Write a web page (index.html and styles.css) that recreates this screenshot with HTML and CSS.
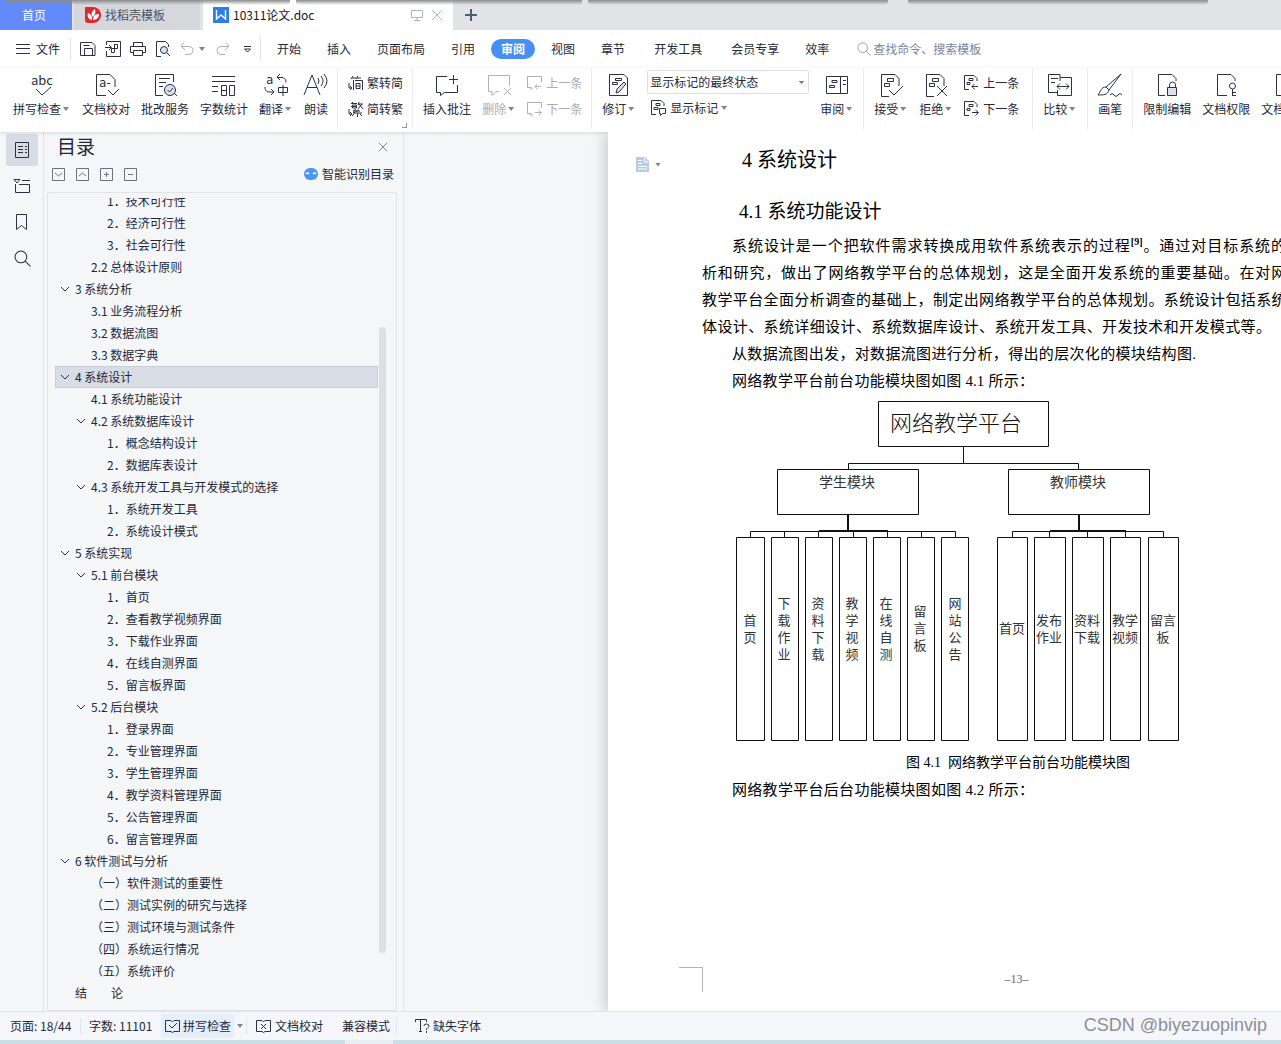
FILE: index.html
```html
<!DOCTYPE html>
<html lang="zh-CN">
<head>
<meta charset="utf-8">
<title>10311论文.doc</title>
<link rel="stylesheet" href="styles.css">
</head>
<body>
<svg class="defs" aria-hidden="true">
  <symbol id="doc-marks" viewBox="0 0 28 24"><path d="M12 23.500H4.500V1.500H18l4 4V13M10.500 5.500h6v3h-6zM7.500 10.500h5v3h-5z"/></symbol>
  <symbol id="x" viewBox="0 0 12 12"><path d="M1 1l10 10M11 1L1 11"/></symbol>
  <symbol id="chev" viewBox="0 0 10 6"><path d="M1 1l4 4 4-4"/></symbol>
  <symbol id="lens" viewBox="0 0 16 16"><circle cx="6.500" cy="6.500" r="5.500"/><path d="M10.500 10.500l5 5"/></symbol>
</svg>
<div class="app">
  <div class="backdrop" aria-hidden="true"><i></i><i></i><i></i><i></i></div>
  <nav class="tabs">
    <a class="tab home" href="#">首页</a>
    <a class="tab template" href="#">
      <svg width="16" height="16" viewBox="0 0 16 16"><path d="M1 0h7a8 8 0 010 16H3a3 3 0 01-3-3V1a1 1 0 011-1z" fill="#e2282f"/><path d="M7 13C3 12 2 9 3 6c3 1 4 3 4 7zm0-3c-1-4 0-6 3-8 1 4 0 6-3 8zm1 3c0-4 2-6 6-6 0 3-2 6-6 6z" fill="#fff"/></svg>找稻壳模板</a>
    <a class="tab current" href="#">
      <svg width="16" height="16" viewBox="0 0 16 16"><path d="M0 0h16v16H0z" fill="#2b7de9"/><path d="M3.500 3v9L8 8l4.500 4V3" fill="none" stroke="#fff" stroke-width="1.400"/></svg>
      <span class="name">10311论文.doc</span>
      <svg class="ic pale" width="12" height="12" viewBox="0 0 12 12"><path d="M.5 1.500h11v7H.5zM6 9v2M3 11.500h6"/></svg>
      <svg class="ic pale shut" width="12" height="12"><use href="#x"/></svg></a>
    <button class="add" aria-label="新建"><svg class="ic" width="12" height="12" viewBox="0 0 12 12"><path d="M6 0v12M0 6h12" stroke-width="2"/></svg></button>
  </nav>

  <div class="menu">
    <button class="file"><svg class="ic" width="14" height="12" viewBox="0 0 14 12"><path d="M0 1.500h14M0 5.500h14M0 10.500h14"/></svg>文件</button>
    <div class="quick">
      <button aria-label="保存"><svg class="ic" width="16" height="16" viewBox="0 0 16 16"><path d="M.5 14.500V1.500H12l3 3v10H.5M4.500 14V7.500h8V14M3.500 4.500h6"/></svg></button>
      <button aria-label="输出PDF"><svg class="ic" width="16" height="16" viewBox="0 0 16 16"><path d="M1.500 4V.5h14v15h-14V10M0 6.500h6M4 4l2.500 2.500L4 9M9.500 3v8M9.500 3.500h3v4h-6v4h3"/></svg></button>
      <button aria-label="打印"><svg class="ic" width="16" height="16" viewBox="0 0 16 16"><path d="M3.500 5V1.500h9V5M3 11.500H.5v-6h15v6H13M3.500 9.500h9v5h-9z"/></svg></button>
      <button aria-label="打印预览"><svg class="ic" width="16" height="16" viewBox="0 0 16 16"><path d="M6 15.500H1.500V.5h9l3 3V6"/><circle cx="9" cy="9" r="3.500" fill="#dce0e8"/><path d="M12 12l3 3"/></svg></button>
      <button aria-label="撤销" class="undo"><svg class="ic off" width="14" height="14" viewBox="0 0 14 14"><path d="M4 1L1 4l4 4M1 4.500h8a4 4 0 010 8H5"/></svg><i class="caret"></i></button>
      <button aria-label="恢复"><svg class="ic off" width="14" height="14" viewBox="0 0 14 14"><path d="M10 1l3 3-4 4M13 4.500H5a4 4 0 000 8h4"/></svg></button>
      <button aria-label="更多" class="more"><svg class="ic" width="9" height="9" viewBox="0 0 9 9"><path d="M1 1.500h7M1.500 4l3 3 3-3z"/></svg></button>
    </div>
    <nav class="ribbon-tabs">
      <a href="#">开始</a><a href="#">插入</a><a href="#">页面布局</a><a href="#">引用</a><a href="#" class="on"><span>审阅</span></a><a href="#">视图</a><a href="#">章节</a><a href="#" class="wide">开发工具</a><a href="#" class="wide">会员专享</a><a href="#">效率</a>
    </nav>
    <label class="find"><svg class="ic" width="14" height="14"><use href="#lens"/></svg><input type="text" aria-label="查找" placeholder="查找命令、搜索模板"></label>
  </div>

  <div class="ribbon">
    <div class="group">
      <button class="big"><svg class="ic" width="28" height="24" viewBox="0 0 28 24"><text x="14" y="12" text-anchor="middle" class="t13">abc</text><path d="M8 16l6 6 9-8"/></svg><span>拼写检查<i class="caret"></i></span></button>
      <button class="big"><svg class="ic" width="28" height="24" viewBox="0 0 28 24"><path d="M14 22.500H4.500V1.500H18l5 5V14M16 17l5 5 6-6"/><text x="7" y="14" class="t13">a-</text></svg><span>文档校对</span></button>
      <button class="big"><svg class="ic" width="28" height="24" viewBox="0 0 28 24"><path d="M12 22.500H4.500V1.500h18V9M8 5.500h11M8 9.500h7M8 13.500h4"/><circle cx="19" cy="17" r="5.500" fill="#dce0e8"/><path d="M23 20l3 3M16.500 17l2 2 3.500-4"/></svg><span>批改服务</span></button>
      <button class="big"><svg class="ic" width="28" height="24" viewBox="0 0 28 24"><path d="M2 3.500h23M2 8.500h23M2 13.500h6M2 18.500h6M11.500 12.500h5v10h-5zM11.500 17.500h5M19.500 12.500h5v10h-5z"/></svg><span>字数统计</span></button>
      <button class="big"><svg class="ic" width="28" height="24" viewBox="0 0 28 24"><text x="4" y="11" class="t13">a</text><path d="M18 1l-3 3 3 3M15 4.500h4c3 0 5 1 5 5M3 14c0 4 2 5 5 5h4M9 16l3 3-3 3M16.500 14.500h9v5h-9zM21 12v11"/></svg><span>翻译<i class="caret"></i></span></button>
      <button class="big"><svg class="ic" width="28" height="24" viewBox="0 0 28 24"><path d="M2 22l8-20 8 20M5 14.500h10M16 5q2 3 0 6M19 3q4 5 0 10M22 1q6 7 0 14"/></svg><span>朗读</span></button>
    </div>
    <div class="group corner">
      <div class="pair">
        <button class="small"><svg class="ic" width="15" height="16" viewBox="0 0 15 16"><path d="M5.500 5v10M5 1L3 4M4 3h4M10 1L8 4M9 3h4M7 5.500h7.500V15M8 8.500h4v5H8zM8 11h4M1 8v5h3M2 11l2 2-2 2"/></svg>繁转简</button>
        <button class="small"><svg class="ic" width="15" height="16" viewBox="0 0 15 16"><path d="M5 1L3 3M4 2.500h5M4.500 4h4v3h-4zM3 5.500h6M11 1l-1 3M10 3h5M11 3l4 5M14 3l-4 5M8 8l-3 2h7M11 9l-6 3h9M9.500 12v4M6 13l-2 2M12 13l2 2M1 8v5h3M2 11l2 2-2 2"/></svg>简转繁</button>
      </div>
    </div>
    <div class="group">
      <button class="big"><svg class="ic" width="28" height="24" viewBox="0 0 28 24"><path d="M14 3.500H3.500v16h4v3l4-3h13V12M20.500 2v9M16 6.500h9"/></svg><span>插入批注</span></button>
      <button class="big off"><svg class="ic" width="28" height="24" viewBox="0 0 28 24"><path d="M14 18.500h-3l-4 4v-4H3.500v-16h21V13M19 15l7 7M26 15l-7 7"/></svg><span>删除<i class="caret"></i></span></button>
      <div class="pair off">
        <button class="small"><svg class="ic" width="15" height="16" viewBox="0 0 15 16"><path d="M6 12.500l-2 2v-2H.5v-11h14V7M14 11.500H8M10.500 9L8 11.500l2.500 3"/></svg>上一条</button>
        <button class="small"><svg class="ic" width="15" height="16" viewBox="0 0 15 16"><path d="M6 12.500l-2 2v-2H.5v-11h14V7M8 11.500h6M11.500 9l3 2.500-3 3"/></svg>下一条</button>
      </div>
    </div>
    <div class="group">
      <button class="big"><svg class="ic" width="28" height="24" viewBox="0 0 28 24"><path d="M22.500 8v14.500h-18V1.500H19l3.500 3.500V9M10.500 5.500h6v2h-6zM7.500 9.500h5v2h-5z"/><path d="M19 9l2 2-7 8-3 1 1-4z" fill="#dce0e8"/></svg><span>修订<i class="caret"></i></span></button>
      <div class="pair state">
        <select aria-label="显示状态"><option>显示标记的最终状态</option></select>
        <button class="small inset"><svg class="ic" width="15" height="16" viewBox="0 0 15 16"><path d="M5 14.500H.5V.5H10l3 3V6M5 3.500h4v2H5zM3 7.500h4v2H3zM8.500 8.500h6v5h-3l-2 2v-2h-1z"/></svg>显示标记<i class="caret"></i></button>
      </div>
      <button class="big"><svg class="ic" width="28" height="24" viewBox="0 0 28 24"><path d="M3.500 3.500h21v17h-21zM17.500 4v16M9 7.500h5v2H9zM6.500 12.500h5v2h-5zM20 7.500h3M20 11.500h3"/></svg><span>审阅<i class="caret"></i></span></button>
    </div>
    <div class="group roomy">
      <button class="big"><svg class="ic" width="28" height="24"><use href="#doc-marks"/><path d="M12 17l5 5 9-9"/></svg><span>接受<i class="caret"></i></span></button>
      <button class="big"><svg class="ic" width="28" height="24"><use href="#doc-marks"/><path d="M15 13l10 10M25 13L15 23"/></svg><span>拒绝<i class="caret"></i></span></button>
      <div class="pair">
        <button class="small"><svg class="ic" width="15" height="16" viewBox="0 0 15 16"><path d="M5 14.500H.5V.5H10l3 3V6M5 3.500h4v2H5zM3 7.500h3v2H3zM14 11.500H8M10.500 9L8 11.500l2.500 3"/></svg>上一条</button>
        <button class="small"><svg class="ic" width="15" height="16" viewBox="0 0 15 16"><path d="M5 14.500H.5V.5H10l3 3V6M5 3.500h4v2H5zM3 7.500h3v2H3zM8 11.500h6M11.500 9l3 2.500-3 3"/></svg>下一条</button>
      </div>
    </div>
    <div class="group">
      <button class="big"><svg class="ic" width="28" height="24" viewBox="0 0 28 24"><path d="M14 8V1.500H2.500v18H12M5 5.500h7M5 9.500h4M14 4.500h11.500v18h-14V17M11 13.500h12M14 10.500l-3 3 3 3M20 10.500l3 3-3 3"/></svg><span>比较<i class="caret"></i></span></button>
    </div>
    <div class="group">
      <button class="big"><svg class="ic" width="28" height="24" viewBox="0 0 28 24"><path d="M25 1L10 14l3 3L25 1M10 14c-5 0-5 4-8 8 5 0 10 0 11-5M14 22q2-3 4 0t4 0 4 0"/></svg><span>画笔</span></button>
    </div>
    <div class="group last">
      <button class="big"><svg class="ic" width="28" height="24" viewBox="0 0 28 24"><path d="M12 22.500H5.500V1.500H19l4 4V8M16.500 14v-2a3 3 0 016 0v2"/><path d="M14.500 14.500h9v8h-9z" fill="#dce0e8"/></svg><span>限制编辑</span></button>
      <button class="big"><svg class="ic" width="28" height="24" viewBox="0 0 28 24"><path d="M15 22.500H5.500V1.500H19l4 4V8M20.500 16v7M20 19.500h4M20 22.500h4"/><circle cx="20.500" cy="13" r="3"/></svg><span>文档权限</span></button>
      <button class="big"><svg class="ic" width="28" height="24" viewBox="0 0 28 24"><path d="M15 22.500H5.500V1.500H19l4 4V8"/></svg><span>文档认证</span></button>
    </div>
  </div>

  <div class="work">
    <nav class="rail">
      <button class="on" aria-label="目录"><svg class="ic" width="16" height="16" viewBox="0 0 16 16"><path d="M1.500.5h13v15h-13zM4 4.500h5M11 4.500h2M4 7.500h5M11 7.500h2M4 10.500h5M11 10.500h2"/></svg></button>
      <button aria-label="章节"><svg class="ic" width="18" height="16" viewBox="0 0 18 16"><path d="M1 1.500h6L4 5zM9 2.500h8M2.500 6v8.500h14v-8H6"/></svg></button>
      <button aria-label="书签"><svg class="ic" width="16" height="18" viewBox="0 0 16 18"><path d="M2.500 1.500h10v15l-5-4-5 4z"/></svg></button>
      <button aria-label="查找"><svg class="ic" width="17" height="17"><use href="#lens"/></svg></button>
    </nav>

    <aside class="panel">
      <header><h2>目录</h2><button aria-label="关闭"><svg class="ic soft" width="10" height="10"><use href="#x"/></svg></button></header>
      <div class="tools">
        <button aria-label="展开"><svg class="ic soft" width="13" height="13" viewBox="0 0 13 13"><path d="M.5.500h12v12H.5zM3 5l3.500 3L10 5"/></svg></button>
        <button aria-label="收缩"><svg class="ic soft" width="13" height="13" viewBox="0 0 13 13"><path d="M.5.500h12v12H.5zM3 8l3.500-3L10 8"/></svg></button>
        <button aria-label="升级"><svg class="ic soft" width="13" height="13" viewBox="0 0 13 13"><path d="M.5.500h12v12H.5zM4 6.500h5M6.500 4v5"/></svg></button>
        <button aria-label="降级"><svg class="ic soft" width="13" height="13" viewBox="0 0 13 13"><path d="M.5.500h12v12H.5zM4 6.500h5"/></svg></button>
        <button class="smart"><svg width="14" height="12" viewBox="0 0 14 12"><rect width="14" height="12" rx="6" fill="#4a97f4"/><path d="M2 6q1.500-2 3 0M9 6q1.500-2 3 0" fill="none" stroke="#fff" stroke-width="1.300"/></svg>智能识别目录</button>
      </div>
      <div class="frame">
        <div class="clip">
          <ul class="toc">
            <li class="l3"><a href="#">1．技术可行性</a></li>
            <li class="l3"><a href="#">2．经济可行性</a></li>
            <li class="l3"><a href="#">3．社会可行性</a></li>
            <li class="l2"><a href="#">2.2 总体设计原则</a></li>
            <li class="l1 open"><a href="#"><svg class="ic" width="10" height="6"><use href="#chev"/></svg>3 系统分析</a></li>
            <li class="l2"><a href="#">3.1 业务流程分析</a></li>
            <li class="l2"><a href="#">3.2 数据流图</a></li>
            <li class="l2"><a href="#">3.3 数据字典</a></li>
            <li class="l1 open sel"><a href="#"><svg class="ic" width="10" height="6"><use href="#chev"/></svg>4 系统设计</a></li>
            <li class="l2"><a href="#">4.1 系统功能设计</a></li>
            <li class="l2 open"><a href="#"><svg class="ic" width="10" height="6"><use href="#chev"/></svg>4.2 系统数据库设计</a></li>
            <li class="l3"><a href="#">1．概念结构设计</a></li>
            <li class="l3"><a href="#">2．数据库表设计</a></li>
            <li class="l2 open"><a href="#"><svg class="ic" width="10" height="6"><use href="#chev"/></svg>4.3 系统开发工具与开发模式的选择</a></li>
            <li class="l3"><a href="#">1．系统开发工具</a></li>
            <li class="l3"><a href="#">2．系统设计模式</a></li>
            <li class="l1 open"><a href="#"><svg class="ic" width="10" height="6"><use href="#chev"/></svg>5 系统实现</a></li>
            <li class="l2 open"><a href="#"><svg class="ic" width="10" height="6"><use href="#chev"/></svg>5.1 前台模块</a></li>
            <li class="l3"><a href="#">1．首页</a></li>
            <li class="l3"><a href="#">2．查看教学视频界面</a></li>
            <li class="l3"><a href="#">3．下载作业界面</a></li>
            <li class="l3"><a href="#">4．在线自测界面</a></li>
            <li class="l3"><a href="#">5．留言板界面</a></li>
            <li class="l2 open"><a href="#"><svg class="ic" width="10" height="6"><use href="#chev"/></svg>5.2 后台模块</a></li>
            <li class="l3"><a href="#">1．登录界面</a></li>
            <li class="l3"><a href="#">2．专业管理界面</a></li>
            <li class="l3"><a href="#">3．学生管理界面</a></li>
            <li class="l3"><a href="#">4．教学资料管理界面</a></li>
            <li class="l3"><a href="#">5．公告管理界面</a></li>
            <li class="l3"><a href="#">6．留言管理界面</a></li>
            <li class="l1 open"><a href="#"><svg class="ic" width="10" height="6"><use href="#chev"/></svg>6 软件测试与分析</a></li>
            <li class="l2"><a href="#">（一）软件测试的重要性</a></li>
            <li class="l2"><a href="#">（二）测试实例的研究与选择</a></li>
            <li class="l2"><a href="#">（三）测试环境与测试条件</a></li>
            <li class="l2"><a href="#">（四）系统运行情况</a></li>
            <li class="l2"><a href="#">（五）系统评价</a></li>
            <li class="l1"><a href="#">结　　论</a></li>
          </ul>
        </div>
        <div class="track" aria-hidden="true"><i></i></div>
      </div>
    </aside>

    <main class="canvas">
      <article class="page">
        <div class="tag" aria-hidden="true"><svg width="13" height="15" viewBox="0 0 13 15"><path d="M0 0h9l4 4v11H0z" fill="#b9cbea"/><path d="M2 3.500h4M2 6.500h4M2 9.500h9M2 12h9M8.500 1v4H12" stroke="#fff" fill="none"/></svg><i class="caret"></i></div>
        <h1>4 系统设计</h1>
        <h2>4.1 系统功能设计</h2>
        <p><span class="line first">系统设计是一个把软件需求转换成用软件系统表示的过程<sup>[9]</sup>。通过对目标系统的分</span><span class="line">析和研究，做出了网络教学平台的总体规划，这是全面开发系统的重要基础。在对网络</span><span class="line">教学平台全面分析调查的基础上，制定出网络教学平台的总体规划。系统设计包括系统总</span><span class="line end">体设计、系统详细设计、系统数据库设计、系统开发工具、开发技术和开发模式等。</span></p>
        <p><span class="line first mid">从数据流图出发，对数据流图进行分析，得出的层次化的模块结构图.</span></p>
        <p><span class="line first brief">网络教学平台前台功能模块图如图 4.1 所示：</span></p>
        <figure>
          <svg class="chart" width="460" height="346" viewBox="0 0 460 346">
            <g class="wire">
              <path d="M148.500 3.500h170v45h-170zM47.500 71.500h141v45h-141zM278.500 71.500h141v45h-141z"/>
              <path d="M6.500 139.500h28v203h-28zM41.500 139.500h27v203h-27zM75.500 139.500h27v203h-27zM109.500 139.500h27v203h-27zM143.500 139.500h27v203h-27zM177.500 139.500h27v203h-27zM211.500 139.500h27v203h-27z"/>
              <path d="M267.500 139.500h30v203h-30zM304.500 139.500h31v203h-31zM342.500 139.500h31v203h-31zM380.500 139.500h30v203h-30zM418.500 139.500h30v203h-30z"/>
              <path d="M233.500 49v16M118.500 71v-5.500h230V71M20.500 139v-5.500h205v5.500M54.500 139v-6M88.500 139v-6M123.500 139v-6M157.500 139v-6M191.500 139v-6"/>
              <path d="M282.500 139v-5.500h151v5.500M319.500 139v-6M357.500 139v-6M395.500 139v-6"/>
              <path d="M118 117v16M89 133h69M349 117v16M320 133h76" stroke-width="2"/>
            </g>
            <text class="root" x="226" y="33">网络教学平台</text>
            <g class="node"><text x="117" y="89">学生模块</text><text x="348" y="89">教师模块</text></g>
            <g class="leaf">
              <text><tspan x="20" y="227">首</tspan><tspan x="20" y="244">页</tspan></text>
              <text><tspan x="54" y="210">下</tspan><tspan x="54" y="227">载</tspan><tspan x="54" y="244">作</tspan><tspan x="54" y="261">业</tspan></text>
              <text><tspan x="88" y="210">资</tspan><tspan x="88" y="227">料</tspan><tspan x="88" y="244">下</tspan><tspan x="88" y="261">载</tspan></text>
              <text><tspan x="122" y="210">教</tspan><tspan x="122" y="227">学</tspan><tspan x="122" y="244">视</tspan><tspan x="122" y="261">频</tspan></text>
              <text><tspan x="156" y="210">在</tspan><tspan x="156" y="227">线</tspan><tspan x="156" y="244">自</tspan><tspan x="156" y="261">测</tspan></text>
              <text><tspan x="190" y="218">留</tspan><tspan x="190" y="235">言</tspan><tspan x="190" y="252">板</tspan></text>
              <text><tspan x="225" y="210">网</tspan><tspan x="225" y="227">站</tspan><tspan x="225" y="244">公</tspan><tspan x="225" y="261">告</tspan></text>
              <text x="282" y="235">首页</text>
              <text><tspan x="319" y="227">发布</tspan><tspan x="319" y="244">作业</tspan></text>
              <text><tspan x="357" y="227">资料</tspan><tspan x="357" y="244">下载</tspan></text>
              <text><tspan x="395" y="227">教学</tspan><tspan x="395" y="244">视频</tspan></text>
              <text><tspan x="433" y="227">留言</tspan><tspan x="433" y="244">板</tspan></text>
            </g>
          </svg>
          <figcaption>图 4.1&nbsp; 网络教学平台前台功能模块图</figcaption>
        </figure>
        <p><span class="line first brief">网络教学平台后台功能模块图如图 4.2 所示：</span></p>
        <footer><i class="crop"></i><span>–13–</span></footer>
      </article>
    </main>
  </div>

  <footer class="status">
    <span class="cell pages">页面: 18/44</span>
    <span class="cell words">字数: 11101</span>
    <button class="cell check"><span class="lit"><svg class="ic" width="15" height="14" viewBox="0 0 15 14"><path d="M6 1.500H.5v11H6l1.500 1 1.500-1h5.500v-11H9L7.500 3zM4 6l3 3 5-5"/></svg>拼写检查</span><i class="caret"></i></button>
    <button class="cell proof"><svg class="ic" width="15" height="14" viewBox="0 0 15 14"><path d="M6 1.500H.5v11H6l1.500 1 1.500-1h5.500v-11H9L7.500 3zM5 5l5 5M10 5l-5 5"/></svg>文档校对</button>
    <span class="cell compat">兼容模式</span>
    <button class="cell fonts"><svg class="ic" width="15" height="16" viewBox="0 0 15 16"><path d="M.5 4V1.500h11V4M5.500 2v11M4 13.500h3M9 8q0-2 2.500-2T14 8q0 1-1.500 2t-1 2M11.500 13v2"/></svg>缺失字体</button>
    <span class="mark">CSDN @biyezuopinvip</span>
  </footer>
  <div class="desk" aria-hidden="true"><i></i></div>
</div>
</body>
</html>
```
FILE: styles.css
```css
* { box-sizing: border-box; }
body {
  margin: 0;
  font: 12px/16px "Noto Sans CJK SC", sans-serif;
  color: #23283a;
  overflow: hidden;
}
button {
  font: inherit;
  color: inherit;
  background: none;
  border: 0;
  padding: 0;
  display: flex;
  align-items: center;
  white-space: nowrap;
}
a { color: inherit; text-decoration: none; }
svg { display: block; flex: none; overflow: visible; }
.defs { position: absolute; width: 0; height: 0; }
.ic { fill: none; stroke: #2b3042; stroke-width: 1; }
.ic text { fill: #2b3042; stroke: none; }
.t13 { font-size: 13px; }
.soft { stroke: #6b7180; }
.pale { stroke: #a9b3c9; }
.ic.off, .off .ic { stroke: #aeb1b8; }
.off { color: #a8abb2; }
.caret {
  flex: none;
  width: 6px;
  height: 4px;
  margin: 0 2px;
  background: #7d8495;
  clip-path: polygon(0 0, 100% 0, 50% 100%);
}

.app { display: flex; flex-direction: column; height: 100vh; position: relative; }

.backdrop {
  position: absolute;
  top: 0;
  left: 5px;
  right: 73px;
  height: 5px;
  display: flex;
  gap: 6px;
  pointer-events: none;
}
.backdrop i { flex: 20; background: linear-gradient(#8b8c8e, #8b8c8e00); border-radius: 0 0 4px 4px; }
.backdrop i:nth-child(-n+2) { flex: 19; }
.backdrop i:last-child { margin-left: 14px; }

.tabs { display: flex; height: 30px; background: #e2e3e7; flex: none; font-size: 12px; }
.tab { display: flex; align-items: center; }
.home { width: 72px; justify-content: center; padding-right: 4px; background: #628afa; color: #fff; }
.template { width: 126px; margin: 0 3px 0 2px; padding-left: 11px; gap: 4px; background: #d5d7db; color: #4c5263; }
.current { width: 250px; padding: 0 10px; gap: 4px; background: #fff; color: #14161c; }
.current .name { flex: 1; }
.shut { margin-left: 4px; }
.add { padding: 0 12px; }
.add .ic { stroke: #505a73; }

.menu { display: flex; align-items: center; height: 38px; background: #fff; flex: none; }
.file { gap: 6px; padding: 0 10px 0 16px; border-right: 1px solid #dfe1e6; height: 24px; }
.quick { display: flex; align-items: center; gap: 9px; height: 24px; width: 190px; padding-left: 9px; border-right: 1px solid #dfe1e6; }
.undo { margin-right: 2px; }
.undo .caret { margin-left: 5px; margin-right: 0; }
.more { margin-left: 4px; }
.ribbon-tabs { display: flex; align-items: center; padding-left: 3px; }
.ribbon-tabs a { padding: 0 13px; white-space: nowrap; }
.ribbon-tabs .wide { padding-left: 16px; }
.ribbon-tabs .on { padding: 0 3px; }
.on span { display: block; padding: 2px 10px; border-radius: 10px; background: #4590f2; color: #fff; font-weight: 700; }
.find { display: flex; align-items: center; gap: 2px; margin-left: 15px; }
.find .ic { stroke: #8b95ad; }
.find input { border: 0; padding: 0; width: 130px; font: inherit; background: none; }
.find input::placeholder { color: #7a849c; opacity: 1; }

.ribbon {
  display: flex;
  height: 64px;
  padding-left: 3px;
  background: #fff;
  overflow: hidden;
  flex: none;
  position: relative;
  box-shadow: 0 1px 4px #0000001f;
}
.group { display: flex; gap: 11px; padding: 5px 9px 0 10px; height: 61px; border-right: 1px solid #ebecef; flex: none; }
.group.last { border: 0; }
.roomy { padding-right: 13px; }
.roomy ~ .group { padding-right: 10px; }
.big { flex-direction: column; justify-content: flex-start; height: 45px; gap: 4px; }
.big > svg { margin: 0 -2px; }
.big > span { display: flex; align-items: center; }
.big.off .ic { stroke: #aeb1b8; }
.pair { display: flex; flex-direction: column; gap: 10px; padding-top: 2px; }
.small { gap: 4px; height: 16px; }
.small .caret { margin-left: -1px; }
.corner { background: linear-gradient(#8d94a5, #8d94a5) right 5px bottom 1px / 5px 1px no-repeat, linear-gradient(#8d94a5, #8d94a5) right 5px bottom 1px / 1px 5px no-repeat; }
.state { width: 162px; padding: 0; gap: 5px; margin-top: -3px; }
.state select {
  appearance: none;
  height: 24px;
  border: 1px solid #dcdee4;
  border-radius: 2px;
  padding: 0 2px;
  font: inherit;
  color: inherit;
  background: linear-gradient(#7d8495, #7d8495) right 4px top 10px / 5px 1px no-repeat, linear-gradient(#7d8495, #7d8495) right 5px top 11px / 3px 1px no-repeat, linear-gradient(#7d8495, #7d8495) right 6px top 12px / 1px 1px no-repeat, #fff;
}
.inset { margin: 1px 0 0 4px; }

.work { display: flex; flex: 1; min-height: 0; background: #f5f6f8; }
.rail { width: 44px; padding: 2px 0 0 6px; display: flex; flex-direction: column; gap: 4px; border-right: 1px solid #e2e4e8; flex: none; }
.rail button { width: 32px; height: 32px; justify-content: center; border-radius: 2px; }
.rail .on { background: #d8dce4; }
.panel { width: 360px; flex: none; display: flex; flex-direction: column; padding: 0 6px 0 3px; border-right: 1px solid #e2e4e8; }
.panel header { display: flex; justify-content: space-between; padding: 2px 9px 0 10px; height: 32px; }
.panel header button { height: 26px; }
.panel h2 { margin: 0; font-size: 19px; line-height: 24px; font-weight: 400; }
.tools { display: flex; align-items: center; gap: 11px; height: 20px; padding: 0 3px 0 5px; }
.smart { margin-left: auto; gap: 4px; }
.frame { flex: 1; min-height: 0; margin-top: 8px; padding: 5px 10px 1px 7px; display: flex; border: 1px solid #e0e3e9; border-radius: 2px; }
.clip { flex: 1; overflow: hidden; }
.toc { list-style: none; margin: -8px 0 0; padding: 0; }
.toc a { display: flex; align-items: center; height: 22px; border: 1px solid transparent; white-space: nowrap; }
.l1 a { padding-left: 19px; }
.l2 a { padding-left: 35px; }
.l3 a { padding-left: 51px; }
.l1.open a { padding-left: 4px; }
.l2.open a { padding-left: 20px; }
.open a { gap: 5px; }
.sel a { background: #d8dce4; border-color: #c9ced8; }
.track { width: 8px; display: flex; flex-direction: column; padding-left: 1px; }
.track::before { content: ""; flex: 129; }
.track i { flex: 625; background: #dce0e4; border-radius: 4px; }
.track::after { content: ""; flex: 56; }

.canvas { flex: 1; min-width: 0; overflow: hidden; padding-left: 187px; }
.page {
  height: 100%;
  margin-left: 17px;
  padding-left: 94px;
  width: 800px;
  background: #fff;
  box-shadow: -3px 0 14px #0000002e;
  color: #000;
  font: 15px/27px "Liberation Serif", "Noto Sans CJK SC", serif;
  display: flex;
  flex-direction: column;
  position: relative;
}
.tag { position: absolute; left: 28px; top: 25px; display: flex; align-items: center; gap: 4px; }
.page h1, .page h2 { margin: 0; font-weight: 400; }
.page h1 { font-size: 20px; line-height: 28px; padding: 14px 0 0 40px; }
.page h2 { font-size: 19px; line-height: 28px; padding: 24px 0 7px 37px; }
.page p { margin: 0; }
.line { display: block; width: 600px; white-space: nowrap; text-align: justify; text-align-last: justify; }
.first { padding-left: 30px; }
.end { width: 569px; }
.mid { width: 494px; }
.brief { width: 332px; }
.page sup { font-size: 10px; line-height: 0; font-weight: 700; }
.page figure { margin: 3px 0 0; }
.chart { margin-left: 28px; }
.wire { fill: none; stroke: #111; }
.chart text { text-anchor: middle; fill: #333; }
.chart .root { font-size: 22px; font-weight: 300; fill: #111; }
.node { font-size: 14px; }
.leaf { font-size: 13px; }
figcaption { width: 632px; text-align: center; font-size: 14px; line-height: 28px; padding-top: 5px; }
.page footer { margin: auto 0 18px -23px; display: flex; height: 26px; color: #666; font-size: 12px; width: 651px; }
.crop { width: 24px; height: 25px; border: solid #b4b4b4; border-width: 1px 1px 0 0; }
.page footer span { flex: 1; text-align: center; line-height: 24px; }

.status { display: flex; align-items: center; height: 29px; flex: none; background: #f5f6f9; border-top: 1px solid #e0e3e7; white-space: nowrap; position: relative; }
.cell { display: flex; align-items: center; gap: 3px; height: 16px; }
.pages { width: 81px; padding-left: 10px; border-right: 1px solid #e0e3e7; }
.words { width: 80px; padding-left: 8px; }
.check { width: 86px; border-right: 1px solid #e0e3e7; }
.lit { display: flex; align-items: center; gap: 3px; height: 24px; padding: 0 3px 0 4px; background: #e6eff9; }
.check .caret { margin: 0; }
.proof { padding-left: 9px; gap: 4px; }
.compat { margin-left: 19px; padding-right: 6px; border-right: 1px solid #e0e3e7; }
.fonts { padding-left: 18px; }
.mark { margin-left: auto; padding: 0 14px 3px 0; font: 18px/24px "Liberation Sans", sans-serif; color: #8d8f93; }
.desk { height: 4px; flex: none; background: #cddfe6; padding-left: 345px; }
.desk i { display: block; width: 48px; height: 4px; background: #e8eff2; }
```
